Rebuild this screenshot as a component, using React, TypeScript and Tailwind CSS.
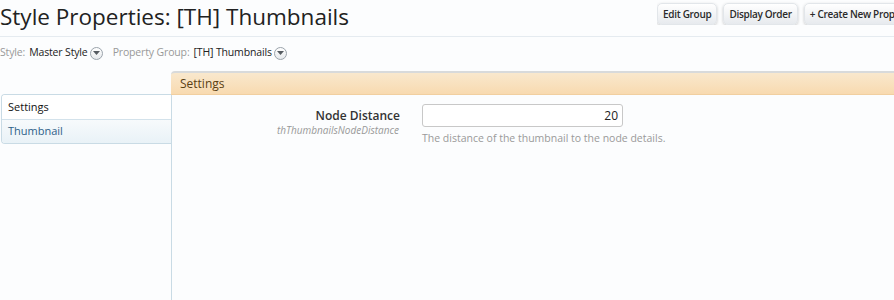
import React from 'react';

const font = { fontFamily: '"Open Sans", "DejaVu Sans", sans-serif' };

const DropIcon: React.FC = () => (
    <span className="inline-flex items-center justify-center w-[13px] h-[13px] rounded-full border border-[#9aa3ab] bg-gradient-to-b from-white to-[#e6e9ec] ml-[1px]">
        <svg width="7" height="4" viewBox="0 0 7 4">
            <path d="M0 0 L7 0 L3.5 4 Z" fill="#555b61" />
        </svg>
    </span>
);

const HeaderButton: React.FC<{ label: string }> = ({ label }) => (
    <button className="shrink-0 h-[22px] px-[5px] rounded-[5px] bg-gradient-to-b from-white to-[#e7eaee] border border-[#e2e6ea] shadow-[0_1px_3px_rgba(0,0,0,0.22)] text-[10px] tracking-[-0.3px] font-semibold text-[#2a2a2a] whitespace-nowrap leading-none">
        {label}
    </button>
);

const App: React.FC = () => {
    return (
        <div className="w-[894px] h-[300px] overflow-hidden bg-[#fcfdfe] text-[#222]" style={font}>
            {/* Title bar */}
            <div className="flex items-start justify-between h-[37px] border-b border-[#e5ebf0]">
                <h1 className="text-[22.5px] leading-[34px] text-[#222] whitespace-nowrap">Style Properties: [TH] Thumbnails</h1>
                <div className="flex gap-[6px] pt-[3px] overflow-hidden w-[237px] shrink-0">
                    <HeaderButton label="Edit Group" />
                    <HeaderButton label="Display Order" />
                    <HeaderButton label="+ Create New Property" />
                </div>
            </div>

            {/* Breadcrumb */}
            <div className="flex items-center h-[32px] text-[10.5px] tracking-[-0.15px] gap-[1px]">
                <span className="text-[#999]">Style:</span>
                <span className="ml-[3px]">Master Style</span>
                <DropIcon />
                <span className="text-[#999] ml-[9px]">Property Group:</span>
                <span className="ml-[3px]">[TH] Thumbnails</span>
                <DropIcon />
            </div>

            {/* Main */}
            <div className="flex h-[231px] mt-[2px]">
                <div className="w-[172px] shrink-0 pt-[23px] pl-[1px]">
                    <ul className="border border-r-0 border-[#c9dbe5] rounded-l-[4px] text-[11px] overflow-hidden">
                        <li className="h-[24px] flex items-center px-[6px] bg-white text-[#111]">Settings</li>
                        <li className="h-[24px] flex items-center px-[6px] border-t border-[#d3e2eb] bg-gradient-to-b from-[#f7fafc] to-[#e9f2f7] text-[#2d6189]">Thumbnail</li>
                    </ul>
                </div>
                <div className="flex-1 flex flex-col">
                    <div className="h-[24px] rounded-tl-[4px] border-t-2 border-[#d8dadb] border-b border-b-[#f1cfa0] bg-gradient-to-b from-[#f9e8cd] to-[#f8dab0] flex items-center pl-[9px] text-[12px] text-[#5b3f14] -ml-px">
                        Settings
                    </div>
                    <div className="flex-1 border-l border-[#c9dbe5] -ml-px">
                        <div className="flex pt-[9px]">
                            <div className="w-[228px] text-right pt-[4px]">
                                <div className="text-[12px] text-[#333] font-semibold leading-[16px]">Node Distance</div>
                                <div className="text-[10px] italic text-[#999] leading-[12px] pr-[1px]">thThumbnailsNodeDistance</div>
                            </div>
                            <div className="ml-[22px]">
                                <div className="w-[201px] h-[23px] rounded-[3px] border border-[#c8c8c8] bg-white flex items-center justify-end pr-[4px] text-[12px] text-[#222]">20</div>
                                <div className="text-[10.5px] text-[#9a9a9a] mt-[4px]">The distance of the thumbnail to the node details.</div>
                            </div>
                        </div>
                    </div>
                </div>
            </div>
        </div>
    );
};

export default App;
